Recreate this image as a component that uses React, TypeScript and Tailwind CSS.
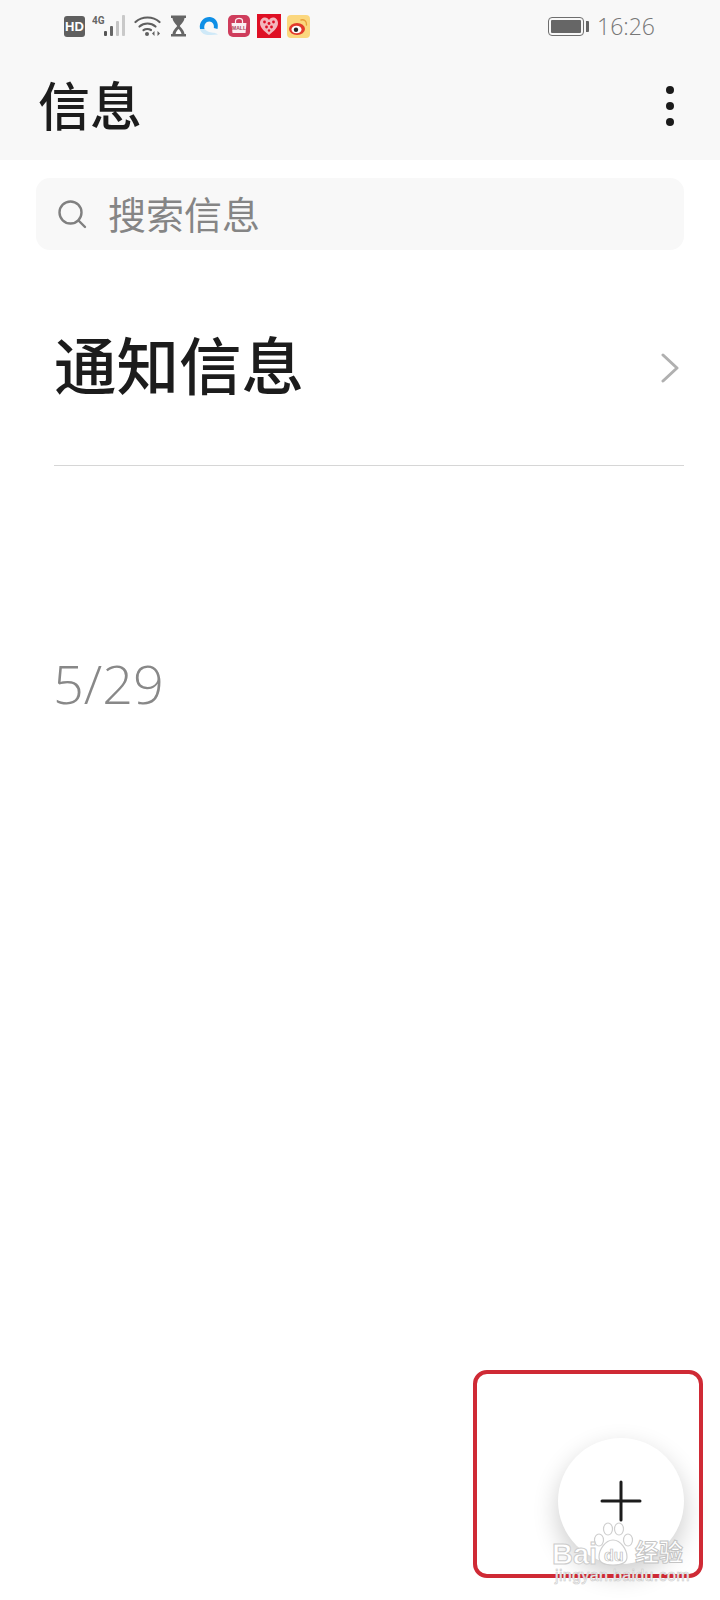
import React from 'react'

const cjk = "font-['Inter','Noto_Sans_CJK_SC',sans-serif]"

function StatusIcons() {
  return (
    <div className="flex items-center">
      {/* HD */}
      <div className="w-[21px] h-[21px] rounded-[3px] bg-[#5f5f5f] flex items-center justify-center text-white text-[13px] font-bold leading-none font-['Liberation_Sans',sans-serif]">
        HD
      </div>
      {/* 4G + signal */}
      <svg className="ml-[7px]" width="36" height="24" viewBox="0 0 36 24">
        <text x="0" y="10" fontSize="10" fontWeight="700" fill="#666" fontFamily="Roboto, sans-serif">4G</text>
        <rect x="12" y="17" width="3" height="5" rx="1" fill="#555" />
        <rect x="18" y="12" width="3" height="10" rx="1" fill="#666" />
        <rect x="24" y="7" width="3" height="15" rx="1" fill="#c4c4c4" />
        <rect x="30" y="1" width="3" height="21" rx="1" fill="#c9c9c9" />
      </svg>
      {/* wifi */}
      <svg className="ml-[6px]" width="28" height="22" viewBox="0 0 28 22" fill="none" stroke="#5f5f5f" strokeWidth="2.2" strokeLinecap="round">
        <path d="M1.5 7 C8 1 19 1 25.5 7" />
        <path d="M5.5 11.5 C10 7.5 17 7.5 21.5 11.5" />
        <path d="M9.5 15.2 C11.5 13.8 15 13.8 17 15" />
        <circle cx="13" cy="19" r="2" fill="#5f5f5f" stroke="none" />
        <path d="M20.5 16 L20.5 21 L18 18.5 Z" fill="#5f5f5f" stroke="none" />
        <path d="M23.5 16 L23.5 21 L26 18.5 Z" fill="#5f5f5f" stroke="none" />
      </svg>
      {/* hourglass */}
      <svg className="ml-[8px]" width="17" height="22" viewBox="0 0 17 22">
        <path d="M1 0.5 H16 V3 H14.5 C14 7 11 9 9.8 11 C11 13 14 15 14.5 19 H16 V21.5 H1 V19 H2.5 C3 15 6 13 7.2 11 C6 9 3 7 2.5 3 H1 Z" fill="#666" />
        <path d="M5.5 19 C6 16.5 7.5 15 8.5 14 C9.5 15 11 16.5 11.5 19 Z" fill="#fff" />
      </svg>
      {/* blue cloud app */}
      <svg className="ml-[11px]" width="22" height="22" viewBox="0 0 22 22">
        <path d="M2 14 C0.5 6 7 1.5 12 2 C18 2.5 21 8 19.5 14 L15.8 13 C16.5 9.5 14.5 6.5 11.2 6.5 C8 6.5 5.5 10 6.5 14 Z" fill="#0f8fe6" />
        <path d="M2 14 C3 19 8 20.5 13 20 L20 19.5 C17 17 13 18 10 16.5 C8 15.5 6.8 14.5 6.5 14 Z" fill="#cfe9f8" />
      </svg>
      {/* mall */}
      <svg className="ml-[8px]" width="22" height="22" viewBox="0 0 22 22">
        <rect width="22" height="22" rx="5" fill="#cf3d5c" />
        <path d="M3.5 8 H18.5 L17.5 18 H4.5 Z" fill="#fbeef1" />
        <path d="M7.5 8 V6 C7.5 2.5 14.5 2.5 14.5 6 V8" fill="none" stroke="#fbeef1" strokeWidth="1.2" />
        <text x="11" y="14.5" fontSize="5" fontWeight="700" textAnchor="middle" fill="#a8475c" fontFamily="Liberation Sans, sans-serif">MALL</text>
      </svg>
      {/* heart */}
      <svg className="ml-[7px]" width="24" height="24" viewBox="0 0 24 24">
        <rect width="24" height="24" fill="#df0f24" />
        <path d="M12 21 C7 17 3 13.5 3 9 C3 5.5 5.5 3.5 8 3.5 C10 3.5 11.2 4.5 12 6 C12.8 4.5 14 3.5 16 3.5 C18.5 3.5 21 5.5 21 9 C21 13.5 17 17 12 21 Z" fill="#f3b7bd" />
        <g fill="#df0f24">
          <circle cx="7.5" cy="8" r="1.4" />
          <circle cx="12" cy="9.5" r="1.4" />
          <circle cx="16.5" cy="8" r="1.4" />
          <circle cx="9.5" cy="13" r="1.4" />
          <circle cx="14.5" cy="13" r="1.4" />
          <circle cx="12" cy="16.5" r="1.2" />
        </g>
      </svg>
      {/* weibo */}
      <svg className="ml-[6px]" width="23" height="23" viewBox="0 0 23 23">
        <rect width="23" height="23" rx="4" fill="#fbd77e" />
        <ellipse cx="10" cy="14" rx="8" ry="6" fill="#e2392b" />
        <ellipse cx="9.5" cy="14.5" rx="5" ry="3.8" fill="#fff" />
        <circle cx="9" cy="14.8" r="2.2" fill="#222" />
        <path d="M14 5 C17 4 20 6.5 19.5 10" fill="none" stroke="#e9a13b" strokeWidth="1.4" strokeLinecap="round" />
      </svg>
    </div>
  )
}

function Battery() {
  return (
    <div className="flex items-center gap-[2px]">
      <div className="w-[36px] h-[19px] rounded-[4px] border-[1.5px] border-[#6e6e6e] p-[2px]">
        <div className="w-full h-full bg-[#666] rounded-[1px]" />
      </div>
      <div className="w-[3px] h-[11px] bg-[#666] rounded-r-[1px]" />
    </div>
  )
}

function Watermark() {
  return (
    <div className="absolute left-[552px] top-[1522px] w-[134px] h-[64px] pointer-events-none text-white">
      <svg className="absolute left-[38px] top-0" width="46" height="44" viewBox="0 0 46 44" fill="#ffffff" stroke="#cfcfcf" strokeWidth="1.2">
        <ellipse cx="9" cy="18" rx="4.5" ry="6" />
        <ellipse cx="18" cy="7" rx="4.5" ry="6" />
        <ellipse cx="29" cy="7" rx="4.5" ry="6" />
        <ellipse cx="38" cy="18" rx="4.5" ry="6" />
        <path d="M23 18 C15 18 9 28 9 35 C9 41 15 43 23 43 C31 43 37 41 37 35 C37 28 31 18 23 18 Z" />
      </svg>
      <span className="absolute left-0 top-[17px] text-[29px] leading-[30px] font-bold font-['Liberation_Sans',sans-serif] [-webkit-text-stroke:1px_#cccccc]">Bai</span>
      <span className="absolute left-[52px] top-[25px] text-[16px] leading-[18px] font-bold font-['Liberation_Sans',sans-serif] [-webkit-text-stroke:0.7px_#bdbdbd]">du</span>
      <span className={`absolute left-[83px] top-[17px] text-[24px] leading-[28px] font-bold [-webkit-text-stroke:1px_#c4c4c4] ${cjk}`}>经验</span>
      <span className="absolute left-[3px] top-[45px] text-[16px] leading-[18px] tracking-[0.35px] font-['Liberation_Sans',sans-serif] [-webkit-text-stroke:0.6px_#c9c9c9]">jingyan.baidu.com</span>
    </div>
  )
}

export default function App() {
  return (
    <div className={`relative w-[720px] h-[1600px] bg-white overflow-hidden ${cjk}`}>
      {/* header */}
      <div className="h-[160px] bg-[#f8f8f8]">
        <div className="h-[52px] pl-[64px] pr-[65px] flex items-center justify-between">
          <StatusIcons />
          <div className="flex items-center gap-[8px]">
            <Battery />
            <span className="text-[23px] leading-none font-light text-[#777] font-['Open_Sans',sans-serif]">16:26</span>
          </div>
        </div>
        <div className="pl-[38px] pr-[46px] h-[108px] flex items-center justify-between">
          <h1 className="text-[52px] leading-[60px] font-medium text-[#1c1c1c] mt-[3px]">信息</h1>
          <div className="flex flex-col gap-[8px] -mt-[1px]">
            <div className="w-2 h-2 rounded-full bg-[#1a1a1a]" />
            <div className="w-2 h-2 rounded-full bg-[#1a1a1a]" />
            <div className="w-2 h-2 rounded-full bg-[#1a1a1a]" />
          </div>
        </div>
      </div>

      {/* search */}
      <div className="mt-[18px] ml-[36px] w-[648px] h-[72px] rounded-[14px] bg-[#f8f8f8] flex items-center pl-[21px]">
        <svg width="30" height="30" viewBox="0 0 30 30" fill="none" stroke="#808080" strokeWidth="2.4" strokeLinecap="round">
          <circle cx="13.5" cy="13.5" r="11" />
          <path d="M21.5 21.5 L28 28" />
        </svg>
        <span className="ml-[21px] pt-[1px] text-[38px] leading-none text-[#858585]">搜索信息</span>
      </div>

      {/* notification row */}
      <div className="ml-[54px] w-[630px] h-[216px] pt-[20px] border-b border-[#d6d6d6] flex items-center justify-between">
        <span className="text-[62.5px] leading-none font-medium text-[#1c1c1c]">通知信息</span>
        <svg className="mr-[5px]" width="18" height="30" viewBox="0 0 18 30" fill="none" stroke="#b0b0b0" strokeWidth="3" strokeLinecap="round" strokeLinejoin="round">
          <path d="M2 2 L16 15 L2 28" />
        </svg>
      </div>

      {/* date */}
      <div className="ml-[53px] mt-[187px] text-[54px] leading-[60px] font-light text-[#888] font-['Open_Sans',sans-serif]">5/29</div>

      {/* add button */}
      <div className="absolute left-[558px] top-[1438px] w-[126px] h-[126px] rounded-full bg-white shadow-[0_10px_26px_rgba(0,0,0,0.2)] flex items-center justify-center">
        <svg width="42" height="42" viewBox="0 0 42 42" stroke="#1c1c1c" strokeWidth="3" strokeLinecap="round">
          <path d="M21 2 V40 M2 21 H40" />
        </svg>
      </div>

      {/* annotation frame */}
      <div className="absolute left-[473px] top-[1370px] w-[230px] h-[208px] rounded-[14px] border-4 border-[#cf2a35]" />
      <Watermark />
    </div>
  )
}
